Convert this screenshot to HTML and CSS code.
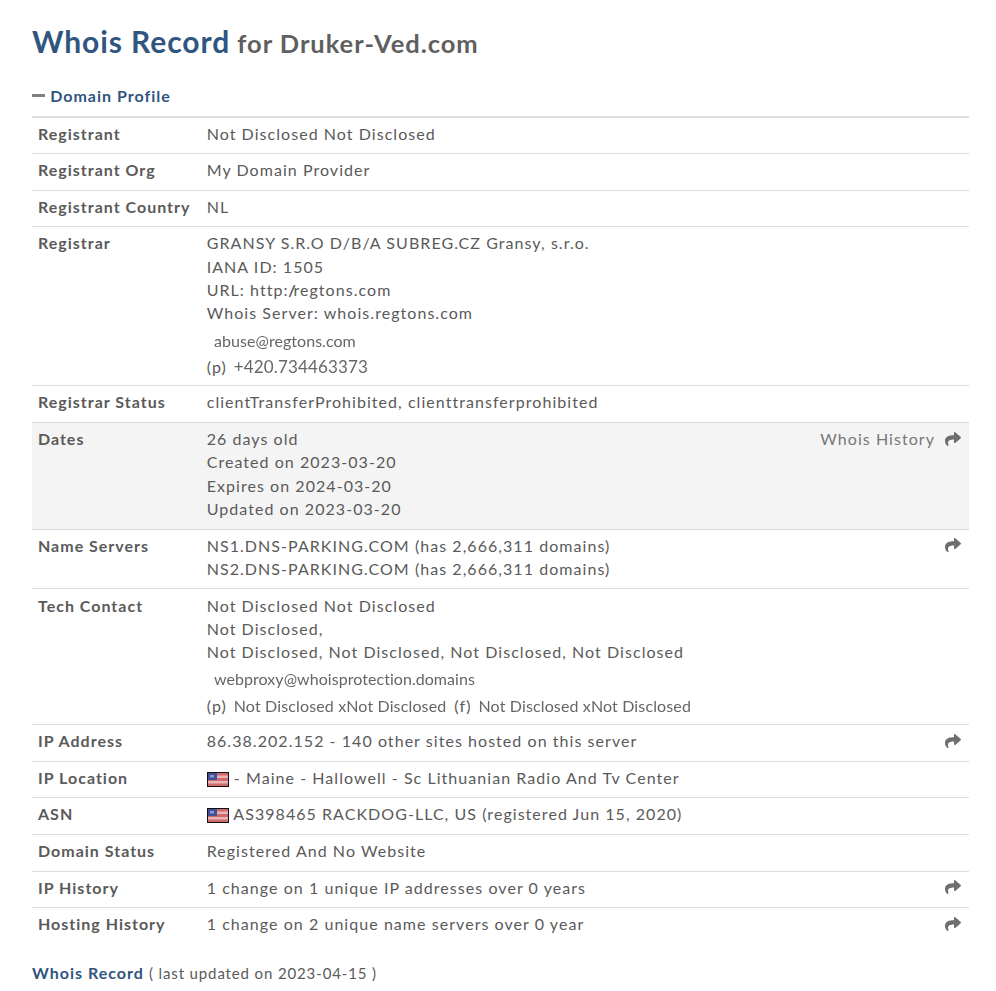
FILE: index.html
```html
<!DOCTYPE html>
<html lang="en">
<head>
<meta charset="utf-8">
<title>Whois Record for Druker-Ved.com</title>
<link rel="stylesheet" href="styles.css">
</head>
<body>
<svg class="defs" width="0" height="0" aria-hidden="true">
  <defs>
    <symbol id="share" viewBox="0 30 512 448">
      <path d="M503.691 189.836 327.687 37.851C312.281 24.546 288 35.347 288 56.015v80.053C127.371 137.907 0 170.100 0 322.326c0 61.441 39.581 122.309 83.333 154.132 13.653 9.931 33.111-2.533 28.077-18.631C66.066 312.814 132.917 274.316 288 272.085V360c0 20.700 24.300 31.453 39.687 18.164l176.004-152c11.071-9.562 11.086-26.753 0-36.328z"/>
    </symbol>
    <symbol id="flag" viewBox="0 0 22 15">
      <rect width="22" height="15" fill="#100e16"/>
      <rect x="1" y="1" width="20" height="13" fill="#cf6a6c"/>
      <path d="M10 3.500h11v2.500H10zM1 9h20v2.500H1z" fill="#eab4b4"/>
      <rect x="1" y="1" width="9" height="7" fill="#3f4f98"/>
      <rect x="3" y="3" width="4" height="2.500" fill="#8d95c8"/>
    </symbol>
  </defs>
</svg>
<main class="page">
  <h1 class="title"><span class="title-main">Whois Record</span> <small class="title-sub">for Druker-Ved.com</small></h1>
  <h2 class="section"><span class="minus"></span>Domain Profile</h2>
  <section class="table">
    <div class="row"><div class="label">Registrant</div><div class="value">Not Disclosed Not Disclosed</div></div>
    <div class="row"><div class="label">Registrant Org</div><div class="value">My Domain Provider</div></div>
    <div class="row"><div class="label">Registrant Country</div><div class="value">NL</div></div>
    <div class="row">
      <div class="label">Registrar</div>
      <div class="value">
        GRANSY S.R.O D/B/A SUBREG.CZ Gransy, s.r.o.<br>
        IANA ID: 1505<br>
        URL: http:<span class="slashes">//</span>regtons.com<br>
        Whois Server: whois.regtons.com
        <div class="contact contact-mail"><span class="pic pic-indent">abuse@regtons.com</span></div>
        <div class="contact contact-phone"><span class="tag">(p)</span><span class="pic pic-phone">+420.734463373</span></div>
      </div>
    </div>
    <div class="row"><div class="label">Registrar Status</div><div class="value">clientTransferProhibited, clienttransferprohibited</div></div>
    <div class="row row-shaded">
      <div class="label">Dates</div>
      <div class="value">26 days old<br>Created on 2023-03-20<br>Expires on 2024-03-20<br>Updated on 2023-03-20</div>
      <div class="action"><span class="action-text">Whois History</span><svg class="share"><use href="#share"/></svg></div>
    </div>
    <div class="row">
      <div class="label">Name Servers</div>
      <div class="value">NS1.DNS-PARKING.COM (has 2,666,311 domains)<br>NS2.DNS-PARKING.COM (has 2,666,311 domains)</div>
      <div class="action"><svg class="share"><use href="#share"/></svg></div>
    </div>
    <div class="row">
      <div class="label">Tech Contact</div>
      <div class="value">
        Not Disclosed Not Disclosed<br>
        Not Disclosed,<br>
        Not Disclosed, Not Disclosed, Not Disclosed, Not Disclosed
        <div class="contact contact-mail"><span class="pic pic-indent">webproxy@whoisprotection.domains</span></div>
        <div class="contact contact-phone"><span class="tag">(p)</span><span class="pic pic-wide">Not Disclosed xNot Disclosed</span><span class="tag tag-f">(f)</span><span class="pic pic-wide">Not Disclosed xNot Disclosed</span></div>
      </div>
    </div>
    <div class="row">
      <div class="label">IP Address</div>
      <div class="value">86.38.202.152 - 140 other sites hosted on this server</div>
      <div class="action"><svg class="share"><use href="#share"/></svg></div>
    </div>
    <div class="row"><div class="label">IP Location</div><div class="value"><svg class="flag"><use href="#flag"/></svg> - Maine - Hallowell - Sc Lithuanian Radio And Tv Center</div></div>
    <div class="row"><div class="label">ASN</div><div class="value"><svg class="flag"><use href="#flag"/></svg> AS398465 RACKDOG-LLC, US (registered Jun 15, 2020)</div></div>
    <div class="row"><div class="label">Domain Status</div><div class="value">Registered And No Website</div></div>
    <div class="row">
      <div class="label">IP History</div>
      <div class="value">1 change on 1 unique IP addresses over 0 years</div>
      <div class="action"><svg class="share"><use href="#share"/></svg></div>
    </div>
    <div class="row row-last">
      <div class="label">Hosting History</div>
      <div class="value">1 change on 2 unique name servers over 0 year</div>
      <div class="action"><svg class="share"><use href="#share"/></svg></div>
    </div>
  </section>
  <p class="footer"><strong class="footer-title">Whois Record</strong> <span class="footer-date">( last updated on 2023-04-15 )</span></p>
</main>
</body>
</html>
```

FILE: styles.css
```css
* { box-sizing: border-box; }
html, body { margin: 0; padding: 0; background: #fff; }
body {
  font-family: Lato, "Open Sans", sans-serif;
  font-size: 16px;
  line-height: 23.33px;
  letter-spacing: 1.05px;
  color: #5a5a5a;
}
.defs { position: absolute; }
.page { padding: 0 27px 0 32px; height: 991px; overflow: hidden; }
.title {
  margin: 0;
  padding-top: 21px;
  line-height: 40px;
  font-size: 30px;
  font-weight: 700;
  letter-spacing: 0.92px;
  color: #2f5580;
}
.title-sub { font-size: 25.5px; color: #5f5f5f; margin-left: -1px; letter-spacing: 0.95px; }
.section {
  margin: 18px 0 0;
  height: 34.5px;
  padding-bottom: 5.5px;
  line-height: 26px;
  font-size: 16px;
  font-weight: 700;
  letter-spacing: 1px;
  color: #2f5580;
  display: flex;
  align-items: center;
}
.minus { width: 12.5px; height: 3px; background: #808080; margin-right: 5.7px; }
.table { border-top: 2px solid #ddd; }
.row {
  display: flex;
  align-items: flex-start;
  padding: 4.15px 6px 8.15px;
  border-bottom: 1px solid #ddd;
}
.row-last { border-bottom: 0; }
.row-shaded { background: #f4f4f4; }
.label { width: 168.7px; flex: none; font-weight: 700; letter-spacing: 1px; }
.value { flex: 1; min-width: 0; }
.slashes { letter-spacing: -4px; margin-right: 2px; }
.action { display: flex; align-items: center; height: 23.33px; color: #777; flex: none; margin-right: 2px; }
.share { width: 16px; height: 14px; margin-left: 10px; fill: #6e6e6e; }
.contact { display: flex; align-items: flex-start; }
.contact-mail { height: 29px; padding-top: 2.8px; line-height: 26.2px; }
.contact-phone { height: 23.4px; line-height: 25.4px; }
.tag { margin-right: 7px; }
.tag-f { margin-left: 8px; }
.pic { letter-spacing: 0; color: #666; filter: blur(0.3px); }
.pic-indent { margin-left: 7.3px; letter-spacing: 0.05px; }
.pic-phone { font-size: 17px; letter-spacing: 0.15px; }
.pic-wide { letter-spacing: 0.14px; }
.flag { width: 22px; height: 15px; vertical-align: -3px; filter: blur(0.4px); }
.footer { margin: 17.500px 0 0; }
.footer-title { color: #2f5580; letter-spacing: 1px; }
.footer-date { font-size: 15px; letter-spacing: 0.87px; }
```
